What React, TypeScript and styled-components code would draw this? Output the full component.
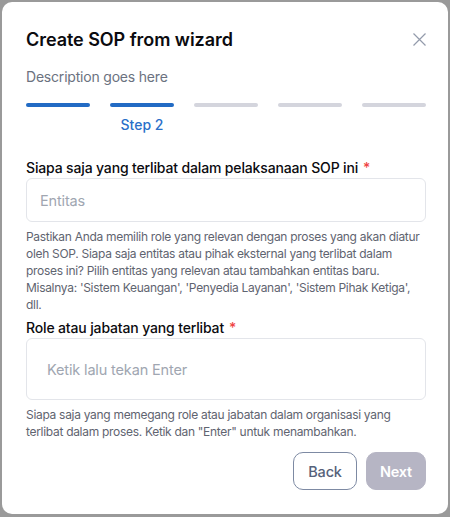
import React from "react";
import styled, { createGlobalStyle } from "styled-components";

const Global = createGlobalStyle`
  html, body { margin: 0; padding: 0; }
  body {
    background: #9a9a9a;
    font-family: Inter, "Noto Sans", sans-serif;
    width: 450px;
    height: 517px;
    overflow: hidden;
  }
`;

const Page = styled.div`
  padding: 2px 2px 3px 2px;
  height: 517px;
  box-sizing: border-box;
`;

const Modal = styled.div`
  background: #ffffff;
  border-radius: 10px;
  height: 100%;
  box-sizing: border-box;
  padding: 26px 22px 0 24px;
  display: flex;
  flex-direction: column;
`;

const Header = styled.div`
  display: flex;
  align-items: center;
  justify-content: space-between;
  height: 22px;
`;

const Title = styled.h1`
  margin: 0;
  font-size: 18px;
  font-weight: 600;
  color: #0b0b0f;
  letter-spacing: -0.05px;
`;

const CloseButton = styled.button`
  border: none;
  background: none;
  padding: 0;
  width: 14px;
  height: 14px;
  display: flex;
  align-items: center;
  justify-content: center;
  color: #939bab;
`;

const Description = styled.p`
  margin: 17px 0 0 0;
  font-size: 14px;
  line-height: 20px;
  color: #6b7280;
  letter-spacing: -0.2px;
`;

const Steps = styled.div`
  margin-top: 16px;
  display: grid;
  grid-template-columns: repeat(5, 64px);
  column-gap: 20px;
`;

const Step = styled.div`
  display: flex;
  flex-direction: column;
  align-items: center;
`;

const Bar = styled.div<{ $active: boolean }>`
  width: 100%;
  height: 4px;
  border-radius: 2px;
  background: ${(p) => (p.$active ? "#226bc4" : "#d4d5dd")};
`;

const StepLabel = styled.span`
  margin-top: 9px;
  font-size: 14px;
  line-height: 18px;
  color: #2a6fc9;
  font-weight: 500;
`;

const Field = styled.div<{ $top: number }>`
  margin-top: ${(p) => p.$top}px;
  display: flex;
  flex-direction: column;
`;

const Label = styled.label`
  font-size: 14px;
  font-weight: 500;
  color: #0b0b0f;
  line-height: 18px;
  letter-spacing: -0.15px;
`;

const Required = styled.span`
  color: #ef4444;
  margin-left: 5px;
`;

const Input = styled.div<{ $height: number; $padX: number }>`
  margin-top: 1px;
  height: ${(p) => p.$height}px;
  border: 1px solid #e3e5ea;
  border-radius: 6px;
  box-sizing: border-box;
  display: flex;
  align-items: center;
  padding: 0 ${(p) => p.$padX}px;
  font-size: 14.5px;
  color: #a0a6b1;
  letter-spacing: -0.15px;
`;

const Help = styled.p`
  margin: 6px 0 0 0;
  font-size: 12px;
  line-height: 17px;
  color: #5f6470;
  letter-spacing: -0.3px;
`;

const Footer = styled.div`
  margin-top: 12px;
  display: flex;
  justify-content: flex-end;
  gap: 9px;
`;

const Button = styled.button<{ $variant: "outline" | "disabled" }>`
  height: 38px;
  border-radius: 10px;
  font-family: inherit;
  font-size: 14.5px;
  font-weight: 500;
  padding: 0;
  box-sizing: border-box;
  letter-spacing: -0.2px;
  ${(p) =>
    p.$variant === "outline"
      ? `background:#fff;border:1px solid #7d8aa3;color:#56627a;width:64px;`
      : `background:#b6b5c4;border:1px solid #b6b5c4;color:#ffffff;width:60px;font-weight:600;`}
`;

const steps = [1, 2, 3, 4, 5];

export default function App() {
  return (
    <>
      <Global />
      <Page>
        <Modal>
          <Header>
            <Title>Create SOP from wizard</Title>
            <CloseButton aria-label="Close">
              <svg width="13" height="13" viewBox="0 0 13 13" fill="none">
                <path d="M0.5 0.5L12.5 12.5M12.5 0.5L0.5 12.5" stroke="currentColor" strokeWidth="1.2" />
              </svg>
            </CloseButton>
          </Header>
          <Description>Description goes here</Description>
          <Steps>
            {steps.map((s) => (
              <Step key={s}>
                <Bar $active={s <= 2} />
                {s === 2 && <StepLabel>Step 2</StepLabel>}
              </Step>
            ))}
          </Steps>
          <Field $top={25}>
            <Label>
              Siapa saja yang terlibat dalam pelaksanaan SOP ini<Required>*</Required>
            </Label>
            <Input $height={44} $padX={13}>Entitas</Input>
            <Help>
              Pastikan Anda memilih role yang relevan dengan proses yang akan diatur oleh SOP. Siapa saja entitas
              atau pihak eksternal yang terlibat dalam proses ini? Pilih entitas yang relevan atau tambahkan entitas
              baru. Misalnya: 'Sistem Keuangan', 'Penyedia Layanan', 'Sistem Pihak Ketiga', dll.
            </Help>
          </Field>
          <Field $top={6}>
            <Label>
              Role atau jabatan yang terlibat<Required>*</Required>
            </Label>
            <Input $height={62} $padX={20}>Ketik lalu tekan Enter</Input>
            <Help>
              Siapa saja yang memegang role atau jabatan dalam organisasi yang terlibat dalam proses. Ketik dan
              "Enter" untuk menambahkan.
            </Help>
          </Field>
          <Footer>
            <Button $variant="outline">Back</Button>
            <Button $variant="disabled">Next</Button>
          </Footer>
        </Modal>
      </Page>
    </>
  );
}
